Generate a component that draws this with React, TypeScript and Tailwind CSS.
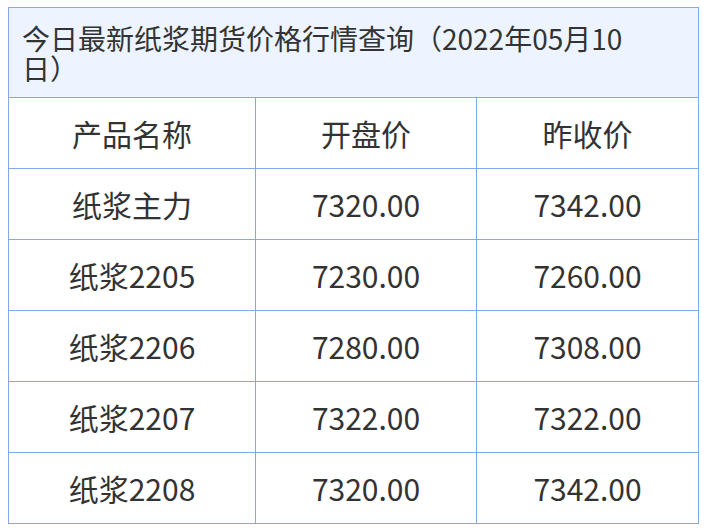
const rows = [
  { name: "纸浆主力", open: "7320.00", prev: "7342.00" },
  { name: "纸浆2205", open: "7230.00", prev: "7260.00" },
  { name: "纸浆2206", open: "7280.00", prev: "7308.00" },
  { name: "纸浆2207", open: "7322.00", prev: "7322.00" },
  { name: "纸浆2208", open: "7320.00", prev: "7342.00" },
];

export default function App() {
  return (
    <div
      className="bg-white w-[704px] h-[531px] pt-[7px] pl-[8px] text-[#333333]"
      style={{ fontFamily: '"Noto Sans CJK SC", "Noto Sans", sans-serif' }}
    >
      <table className="w-[690px] border-collapse table-fixed">
        <colgroup>
          <col className="w-[247px]" />
          <col className="w-[221px]" />
          <col className="w-[222px]" />
        </colgroup>
        <tbody>
          <tr>
            <td
              colSpan={3}
              className="h-[90px] border border-[#82a9ea] bg-[#edf4ff] px-[13px] text-left text-[28px] leading-[30px]"
            >
              今日最新纸浆期货价格行情查询（2022年05月10
              <br />
              日）
            </td>
          </tr>
          <tr>
            {["产品名称", "开盘价", "昨收价"].map((h) => (
              <td
                key={h}
                className="h-[71px] border border-[#82a9ea] text-center text-[30px] font-normal"
              >
                {h}
              </td>
            ))}
          </tr>
          {rows.map((r) => (
            <tr key={r.name}>
              <td className="h-[71px] border border-[#82a9ea] text-center text-[30px]">{r.name}</td>
              <td className="h-[71px] border border-[#82a9ea] text-center text-[30px]">{r.open}</td>
              <td className="h-[71px] border border-[#82a9ea] text-center text-[30px]">{r.prev}</td>
            </tr>
          ))}
        </tbody>
      </table>
    </div>
  );
}
